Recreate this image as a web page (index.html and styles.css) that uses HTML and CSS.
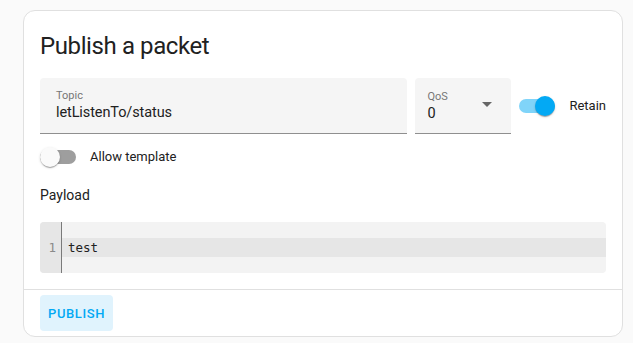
FILE: index.html
```html
<!DOCTYPE html>
<html lang="en">
<head>
  <meta charset="UTF-8" />
  <title>Publish a packet</title>
  <link rel="stylesheet" href="styles.css">
</head>
<body>
  <div class="card">
    <div class="card-content">
      <h1 class="card-title">Publish a packet</h1>

      <div class="row">
        <div class="field topic">
          <span class="field-label">Topic</span>
          <span class="field-value">letListenTo/status</span>
        </div>
        <div class="field qos">
          <div class="field-text">
            <span class="field-label">QoS</span>
            <span class="field-value">0</span>
          </div>
          <span class="arrow"></span>
        </div>
        <label class="switch-row">
          <span class="switch on"><span class="track"></span><span class="thumb"></span></span>
          <span class="switch-label">Retain</span>
        </label>
      </div>

      <label class="switch-row template">
        <span class="switch"><span class="track"></span><span class="thumb"></span></span>
        <span class="switch-label">Allow template</span>
      </label>

      <p class="payload-label">Payload</p>

      <div class="editor">
        <div class="gutter"><div class="line-no">1</div></div>
        <div class="code">
          <div class="code-line active">test</div>
        </div>
      </div>
    </div>

    <div class="card-actions">
      <button class="btn">Publish</button>
    </div>
  </div>
</body>
</html>
```

FILE: styles.css
```css
body {
  margin: 0;
  padding: 10px 10px 6px 23px;
  background: #fafafa;
  font-family: Roboto, "Liberation Sans", Arial, sans-serif;
  color: #212121;
}

.card {
  background: #fff;
  border: 1px solid #e0e0e0;
  border-radius: 12px;
}

.card-content {
  padding: 19px 16px 16px;
}

.card-title {
  margin: 0 0 16px;
  font-size: 24px;
  font-weight: 400;
  line-height: 32px;
  letter-spacing: -0.4px;
  color: #212121;
}

.row {
  display: flex;
  align-items: center;
  gap: 8px;
}

.field {
  background: #f5f5f5;
  border-bottom: 1px solid #8f8f8f;
  border-radius: 4px 4px 0 0;
  box-sizing: content-box;
}

.topic {
  flex: 1;
  display: flex;
  flex-direction: column;
  padding: 11px 16px 0;
  height: 44px;
}

.qos {
  width: 96px;
  display: flex;
  align-items: center;
  justify-content: space-between;
  padding: 0 19px 0 12px;
  box-sizing: border-box;
  height: 56px;
}

.field-text {
  display: flex;
  flex-direction: column;
  padding-top: 1px;
}

.field-label {
  font-size: 11px;
  line-height: 14px;
  color: #757575;
}

.field-value {
  font-size: 14.5px;
  line-height: 19px;
  letter-spacing: -0.1px;
  color: #212121;
}

.arrow {
  width: 0;
  height: 0;
  border-left: 5px solid transparent;
  border-right: 5px solid transparent;
  border-top: 5px solid #666;
  margin-top: -2px;
}

.switch-row {
  display: flex;
  align-items: center;
  gap: 14px;
}

.switch {
  position: relative;
  width: 36px;
  height: 20px;
  flex: none;
}

.track {
  position: absolute;
  left: 0;
  right: 0;
  top: 3px;
  height: 14px;
  border-radius: 7px;
  background: #9e9e9e;
}

.thumb {
  position: absolute;
  top: 0;
  left: 0;
  width: 20px;
  height: 20px;
  border-radius: 50%;
  background: #fafafa;
  box-shadow: 0 2px 1px -1px rgba(0,0,0,.2), 0 1px 1px rgba(0,0,0,.14), 0 1px 3px rgba(0,0,0,.12);
}

.switch.on .track {
  background: #80d4f9;
}

.switch.on .thumb {
  left: 16px;
  background: #03a9f4;
}

.switch-label {
  font-size: 13px;
  line-height: 20px;
  color: #212121;
}

.template {
  margin-top: 13px;
}

.payload-label {
  margin: 18px 0 17px;
  font-size: 14px;
  line-height: 20px;
}

.editor {
  display: flex;
  background: #f3f3f3;
  border-radius: 4px;
  overflow: hidden;
}

.gutter {
  width: 21px;
  background: #e6e6e6;
  border-right: 1px solid #7a7a7a;
  padding: 16px 0;
}

.line-no {
  text-align: right;
  padding-right: 5px;
  font-family: "DejaVu Sans Mono", "Liberation Mono", monospace;
  font-size: 12.5px;
  line-height: 19px;
  color: #8a8a8a;
}

.code {
  flex: 1;
  padding: 16px 0;
}

.code-line {
  padding-left: 6px;
  font-family: "DejaVu Sans Mono", "Liberation Mono", monospace;
  font-size: 12.5px;
  line-height: 19px;
  color: #212121;
}

.code-line.active {
  background: #e6e6e6;
}

.card-actions {
  border-top: 1px solid #e0e0e0;
  padding: 5px 16px;
}

.btn {
  display: block;
  height: 36px;
  padding: 0 8px;
  border: none;
  border-radius: 4px;
  background: #e0f3fd;
  color: #03a9f4;
  font-family: Roboto, "Liberation Sans", Arial, sans-serif;
  font-size: 13px;
  font-weight: 500;
  letter-spacing: 0.6px;
  text-transform: uppercase;
}
```
